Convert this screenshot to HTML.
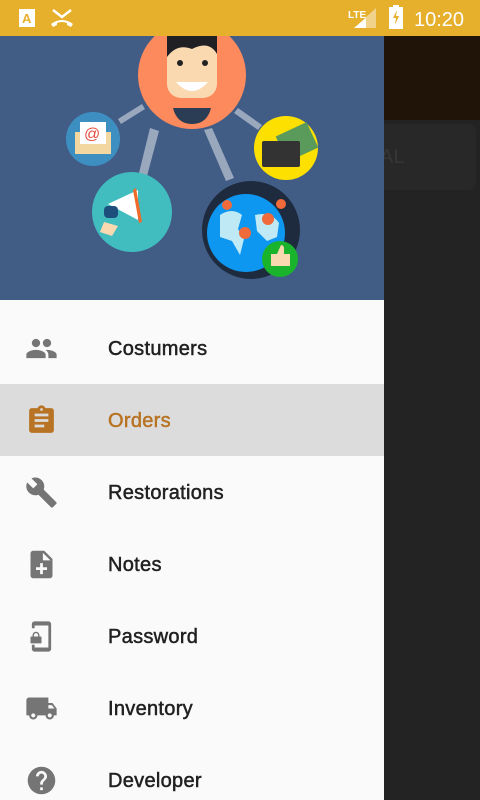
<!DOCTYPE html>
<html><head><meta charset="utf-8"><style>
*{margin:0;padding:0;box-sizing:border-box}
html{width:480px;height:800px;overflow:hidden}
body{width:480px;height:800px;overflow:hidden;position:relative;background:#232323;font-family:"Liberation Sans",Roboto,sans-serif}
.sb{position:absolute;top:0;left:0;width:480px;height:36px;background:#e6af2c;color:#fff}
.ov1{position:absolute;left:384px;top:36px;width:96px;height:84px;background:#201408}
.card{position:absolute;left:384px;top:124px;width:92px;height:66px;background:#282828;border-radius:0 8px 8px 0}
.card span{position:absolute;left:-4px;top:22px;color:#363636;font-size:20px}
.drawer{position:absolute;left:0;top:36px;width:384px;height:764px;background:#fafafa;overflow:hidden}
.hdr{height:264px;background:#415d86;position:relative;overflow:hidden}
.item{position:absolute;left:0;width:384px;height:72px}
.item svg{position:absolute;left:25px;top:20px;width:33px;height:33px;fill:#757575}
.item span{position:absolute;left:108px;top:25px;font-size:20px;color:#212121;line-height:24px;letter-spacing:0.3px;-webkit-text-stroke:0.5px #212121}
.sel{background:#dcdcdc}.sel svg{fill:#b87424}.sel span{color:#b87424;-webkit-text-stroke:0.5px #b87424}
</style></head><body>
<div class="sb">
<svg width="480" height="36" style="position:absolute;left:0;top:0">
<rect x="19" y="9" width="16" height="18" fill="#fff"/><text x="22" y="23" font-size="13" font-weight="bold" fill="#e6af2c" font-family="Liberation Sans">A</text>
<path d="M53 10l9 7 9-7" stroke="#fff" stroke-width="2.5" fill="none"/>
<path d="M51 24q11-8 22 0l-2 3-4-2v-2q-5-2-10 0v2l-4 2z" fill="#fff"/>
<text x="348" y="18" font-size="10" font-weight="bold" fill="#fff" font-family="Liberation Sans">LTE</text>
<path d="M354 28l22-20v20z" fill="#f0d28a"/><path d="M354 28l12-10v10z" fill="#fff"/>
<rect x="389" y="7" width="14" height="22" fill="#fff"/><rect x="393" y="5" width="6" height="3" fill="#fff"/>
<path d="M397 10l-4 8h3l-1 7 4-9h-3z" fill="#e6af2c"/>
<text x="414" y="26" font-size="20" fill="#fff" font-family="Liberation Sans">10:20</text>
</svg></div>
<div class="ov1"></div>
<div class="card"><span>AL</span></div>
<div class="drawer">
<div class="hdr">
<svg width="384" height="264" viewBox="0 36 384 264">
<g fill="#9aa8be">
<path d="M118 119l24-15 3 5-24 15z"/><path d="M150 128l9 3-12 45-8-3z"/><path d="M204 130l8-2 22 50-8 3z"/><path d="M238 108l24 17-4 5-24-17z"/>
</g>
<circle cx="192" cy="75" r="54" fill="#fd8a5c"/>
<rect x="167" y="36" width="50" height="62" rx="14" fill="#fbd9b0"/>
<path d="M167 36h50v18q-8-14-25-5q-15-6-25 8z" fill="#1f1f24"/>
<path d="M176 82q16 18 32 0z" fill="#fff"/>
<circle cx="180" cy="63" r="3" fill="#222"/><circle cx="205" cy="63" r="3" fill="#222"/>
<path d="M173 108h38q-4 16-19 16q-15 0-19-16z" fill="#2b3c55"/>
<circle cx="93" cy="139" r="27" fill="#3e8fc1"/>
<path d="M75 132h36v22h-36z" fill="#f3d7a0"/><rect x="80" y="122" width="26" height="22" fill="#fff"/>
<text x="84" y="139" font-size="16" fill="#e24b40" font-family="Liberation Sans">@</text>
<circle cx="286" cy="148" r="32" fill="#fde000"/>
<rect x="280" y="128" width="34" height="28" fill="#5a9a5a" transform="rotate(-25 297 142)"/>
<rect x="262" y="141" width="38" height="26" rx="2" fill="#333"/>
<circle cx="132" cy="212" r="40" fill="#41bdc0"/>
<path d="M108 204l30-14v30z" fill="#fff"/><path d="M136 188l6 34-3 1-6-33z" fill="#f06a2a"/>
<rect x="104" y="206" width="14" height="12" rx="4" fill="#1e4f7c"/>
<path d="M104 222l14 4-6 10-12-4z" fill="#fbd9b0"/>
<circle cx="251" cy="230" r="49" fill="#1e2b3e"/>
<circle cx="246" cy="233" r="39" fill="#0d97f0"/>
<path d="M220 215q12-8 22 0l-4 14 6 10-4 16-8-14-12-4z" fill="#bfe9f5"/><path d="M255 215q16-4 24 8l-2 14-10 4-10-10z" fill="#bfe9f5"/>
<g fill="#f06a3a"><circle cx="227" cy="205" r="5"/><circle cx="281" cy="204" r="5"/><circle cx="268" cy="219" r="6"/><circle cx="245" cy="233" r="6"/></g>
<circle cx="280" cy="259" r="18" fill="#19b32c"/>
<path d="M271 254h6l4-9q3 0 3 4v5h6v12h-19z" fill="#fbd9b0"/>
</svg>
</div>
<div class="item" style="top:276px"><svg viewBox="0 0 24 24"><path d="M16 11c1.66 0 2.99-1.34 2.99-3S17.66 5 16 5s-3 1.34-3 3 1.34 3 3 3zm-8 0c1.66 0 2.99-1.34 2.99-3S9.66 5 8 5 5 6.34 5 8s1.34 3 3 3zm0 2c-2.33 0-7 1.17-7 3.5V19h14v-2.5c0-2.33-4.67-3.5-7-3.5zm8 0c-.29 0-.62.02-.97.05 1.16.84 1.97 1.97 1.97 3.45V19h6v-2.5c0-2.33-4.67-3.5-7-3.5z"/></svg><span>Costumers</span></div>
<div class="item sel" style="top:348px"><svg viewBox="0 0 24 24"><path d="M19 3h-4.18C14.4 1.84 13.3 1 12 1s-2.4.84-2.82 2H5c-1.1 0-2 .9-2 2v14c0 1.1.9 2 2 2h14c1.1 0 2-.9 2-2V5c0-1.1-.9-2-2-2zm-7 0c.55 0 1 .45 1 1s-.45 1-1 1-1-.45-1-1 .45-1 1-1zm2 14H7v-2h7v2zm3-4H7v-2h10v2zm0-4H7V7h10v2z"/></svg><span>Orders</span></div>
<div class="item" style="top:420px"><svg viewBox="0 0 24 24"><path d="M22.7 19l-9.1-9.1c.9-2.3.4-5-1.5-6.9-2-2-5-2.4-7.4-1.3L9 6 6 9 1.6 4.7C.4 7.1.9 10.1 2.9 12.1c1.9 1.9 4.6 2.4 6.9 1.5l9.1 9.1c.4.4 1 .4 1.4 0l2.3-2.3c.5-.4.5-1.1.1-1.4z"/></svg><span>Restorations</span></div>
<div class="item" style="top:492px"><svg viewBox="0 0 24 24"><path d="M14 2H6c-1.1 0-1.99.9-1.99 2L4 20c0 1.1.89 2 1.99 2H18c1.1 0 2-.9 2-2V8l-6-6zm2 14h-3v3h-2v-3H8v-2h3v-3h2v3h3v2zm-3-7V3.5L18.5 9H13z"/></svg><span>Notes</span></div>
<div class="item" style="top:564px"><svg viewBox="0 0 24 24"><path d="M17 1H7c-1.1 0-2 .9-2 2v3h2V4h10v16H7v-2H5v3c0 1.1.9 2 2 2h10c1.1 0 2-.9 2-2V3c0-1.1-.9-2-2-2zM8 8.5c-1.38 0-2.5 1.12-2.5 2.5v1H4.5c-.28 0-.5.22-.5.5v4c0 .28.22.5.5.5h7c.28 0 .5-.22.5-.5v-4c0-.28-.22-.5-.5-.5h-1v-1c0-1.38-1.12-2.5-2.5-2.5zm1.5 3.5h-3v-1c0-.83.67-1.5 1.5-1.5s1.5.67 1.5 1.5v1z"/></svg><span>Password</span></div>
<div class="item" style="top:636px"><svg viewBox="0 0 24 24"><path d="M20 8h-3V4H3c-1.1 0-2 .9-2 2v11h2c0 1.66 1.34 3 3 3s3-1.34 3-3h6c0 1.66 1.34 3 3 3s3-1.34 3-3h2v-5l-3-4zM6 18.5c-.83 0-1.5-.67-1.5-1.5s.67-1.5 1.5-1.5 1.5.67 1.5 1.5-.67 1.5-1.5 1.5zm13.5-9l1.96 2.5H17V9.5h2.5zm-1.5 9c-.83 0-1.5-.67-1.5-1.5s.67-1.5 1.5-1.5 1.5.67 1.5 1.5-.67 1.5-1.5 1.5z"/></svg><span>Inventory</span></div>
<div class="item" style="top:708px"><svg viewBox="0 0 24 24"><path d="M12 2C6.48 2 2 6.48 2 12s4.48 10 10 10 10-4.48 10-10S17.52 2 12 2zm1 17h-2v-2h2v2zm2.07-7.75l-.9.92C13.45 12.9 13 13.5 13 15h-2v-.5c0-1.1.45-2.1 1.17-2.83l1.24-1.26c.37-.36.59-.86.59-1.41 0-1.1-.9-2-2-2s-2 .9-2 2H8c0-2.21 1.79-4 4-4s4 1.79 4 4c0 .88-.36 1.68-.93 2.25z"/></svg><span>Developer</span></div>
</div>
</body></html>
